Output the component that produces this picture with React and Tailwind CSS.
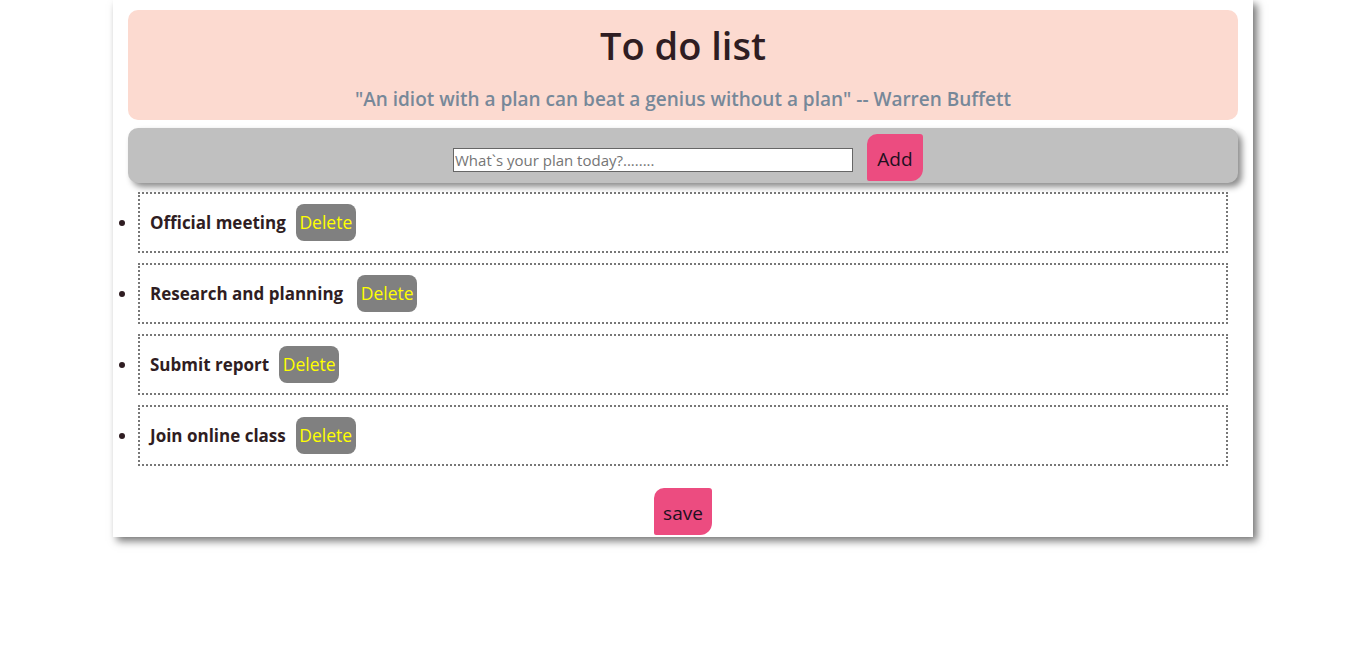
import React, { useState } from 'react';

const initialTasks = [
  { text: 'Official meeting', gap: 'ml-[10px]' },
  { text: 'Research and planning', gap: 'ml-[14px]' },
  { text: 'Submit report', gap: 'ml-[10px]' },
  { text: 'Join online class', gap: 'ml-[10px]' },
];

function TaskItem({ task, onDelete }) {
  return (
    <li className="mb-[10px] flex h-[61px] items-center border-2 border-dotted border-[#777] pl-[10px] text-[17px] font-bold text-[#2f1d22] list-item">
      <div className="flex h-full items-center">
        <span>{task.text}</span>
        <button
          onClick={onDelete}
          className={`${task.gap} h-[37px] w-[60px] rounded-[8px] bg-[#808080] text-[17.5px] font-normal text-[#ffff00]`}
        >
          Delete
        </button>
      </div>
    </li>
  );
}

export default function App() {
  const [tasks, setTasks] = useState(initialTasks);
  const [plan, setPlan] = useState('');

  const addTask = () => {
    if (!plan.trim()) return;
    setTasks([...tasks, { text: plan, gap: 'ml-[10px]' }]);
    setPlan('');
  };

  return (
    <div className="min-h-screen bg-white" style={{ fontFamily: '"Open Sans", "Noto Sans", sans-serif' }}>
      <div className="mx-auto w-[1140px] bg-white pt-[10px] pb-[2px] shadow-[4px_4px_8px_rgba(0,0,0,0.55)]">
        <header className="mx-[15px] flex h-[110px] flex-col items-center rounded-[10px] bg-[#fcdad0] pt-[12px]">
          <h1 className="text-[38px] font-semibold leading-[46px] text-[#2f1d22]">To do list</h1>
          <p className="mt-[17px] text-[19px] font-semibold text-[#778899]">
            "An idiot with a plan can beat a genius without a plan" -- Warren Buffett
          </p>
        </header>

        <div className="mx-[15px] mt-[8px] flex h-[55px] items-center justify-center rounded-[10px] bg-[#c0c0c0] shadow-[4px_4px_6px_rgba(0,0,0,0.45)]">
          <input
            value={plan}
            onChange={(e) => setPlan(e.target.value)}
            placeholder="What`s your plan today?........"
            className="ml-[10px] mt-[8px] h-[24px] w-[400px] border border-[#666] bg-white px-[1px] text-[15px] text-black placeholder:text-[#757575] outline-none"
          />
          <button
            onClick={addTask}
            className="ml-[14px] mt-[4px] h-[47px] w-[56px] rounded-[10px_3px_12px_2px] bg-[#ec4c80] pt-[4px] text-[19px] text-[#1e1020]"
          >
            Add
          </button>
        </div>

        <ul className="mt-[9px] list-disc px-[25px] marker:text-[#2f1d22]">
          {tasks.map((t, i) => (
            <TaskItem key={i} task={t} onDelete={() => setTasks(tasks.filter((_, j) => j !== i))} />
          ))}
        </ul>

        <div className="mt-[22px] flex justify-center">
          <button className="h-[47px] w-[58px] rounded-[10px_3px_12px_2px] bg-[#ec4c80] pt-[4px] text-[19px] text-[#1e1020]">
            save
          </button>
        </div>
      </div>
    </div>
  );
}
